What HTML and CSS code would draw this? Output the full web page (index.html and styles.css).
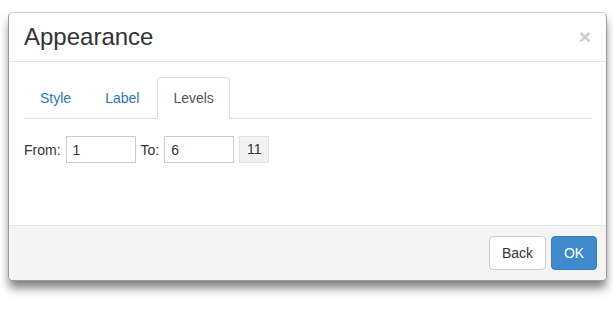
FILE: index.html
```html
<!DOCTYPE html>
<html>
<head>
<meta charset="utf-8">
<link rel="stylesheet" href="styles.css">
</head>
<body>
<div class="modal">
  <div class="modal-header">
    <h3 class="title">Appearance</h3>
    <span class="close">×</span>
  </div>
  <div class="modal-body">
    <ul class="tabs">
      <li class="tab"><a>Style</a></li>
      <li class="tab"><a>Label</a></li>
      <li class="tab active"><a>Levels</a></li>
    </ul>
    <div class="tab-content">
      <span class="lbl">From:</span>
      <input class="field" type="text" value="1">
      <span class="lbl">To:</span>
      <input class="field" type="text" value="6">
      <span class="count">11</span>
    </div>
  </div>
  <div class="modal-footer">
    <button class="btn btn-default">Back</button>
    <button class="btn btn-primary">OK</button>
  </div>
</div>
</body>
</html>
```
FILE: styles.css
```css
* { box-sizing: border-box; }
html, body { margin: 0; padding: 0; background: #fff; }
body {
  font-family: "Liberation Sans", Arial, Helvetica, sans-serif;
  font-size: 14px;
  line-height: 20px;
  color: #333;
  padding: 12px 6px 0 8px;
  min-height: 319px;
}
.modal {
  width: 599px;
  background: #fff;
  border: 1px solid rgba(0,0,0,0.4);
  border-top-color: rgba(0,0,0,0.2);
  border-radius: 5px;
  box-shadow: 0 8px 10px -1px rgba(0,0,0,0.5);
  overflow: hidden;
}
.modal-header {
  display: flex;
  justify-content: space-between;
  align-items: flex-start;
  padding: 10px 15px 10px 15px;
  border-bottom: 1px solid #e5e5e5;
}
.title {
  margin: 0;
  font-size: 24px;
  font-weight: normal;
  line-height: 28px;
  color: #333;
}
.close {
  font-size: 21px;
  font-weight: bold;
  line-height: 20px;
  color: #000;
  opacity: 0.2;
  margin-top: 4px;
  margin-right: 0;
}
.modal-body {
  padding: 15px 14px 0 15px;
  height: 163px;
}
.tabs {
  list-style: none;
  margin: 0;
  padding: 0;
  display: flex;
  border-bottom: 1px solid #ddd;
}
.tab { margin-bottom: -1px; margin-right: 2px; }
.tab a {
  display: block;
  padding: 10px 15px;
  line-height: 20px;
  border: 1px solid transparent;
  border-radius: 4px 4px 0 0;
  color: #2a7ab0;
}
.tab.active a {
  color: #555;
  background: #fff;
  border-color: #ddd #ddd transparent #ddd;
}
.tab-content {
  display: flex;
  align-items: center;
  padding-top: 17px;
}
.lbl { margin-right: 5px; color: #333; }
.field {
  width: 70px;
  height: 27px;
  padding: 2px 6px;
  border: 1px solid #ccc;
  font-family: inherit;
  font-size: 14px;
  color: #333;
  margin-right: 5px;
  border-radius: 0;
  outline: none;
}
.count {
  display: inline-block;
  width: 30px;
  height: 27px;
  line-height: 25px;
  text-align: center;
  background: #f2f2f2;
  border: 1px solid #e3e3e3;
}
.modal-footer {
  display: flex;
  justify-content: flex-end;
  gap: 5px;
  padding: 10px 9px 10px 10px;
  background: #f4f4f4;
  border-top: 1px solid #e5e5e5;
}
.btn {
  font-family: inherit;
  font-size: 14px;
  line-height: 20px;
  height: 34px;
  padding: 6px 11px;
  border: 1px solid;
  border-radius: 4px;
  cursor: pointer;
}
.btn-default { background: #fff; color: #333; border-color: #ccc; width: 57px; }
.btn-primary { background: #3e8acc; color: #fff; border-color: #357ebd; width: 46px; }
```
